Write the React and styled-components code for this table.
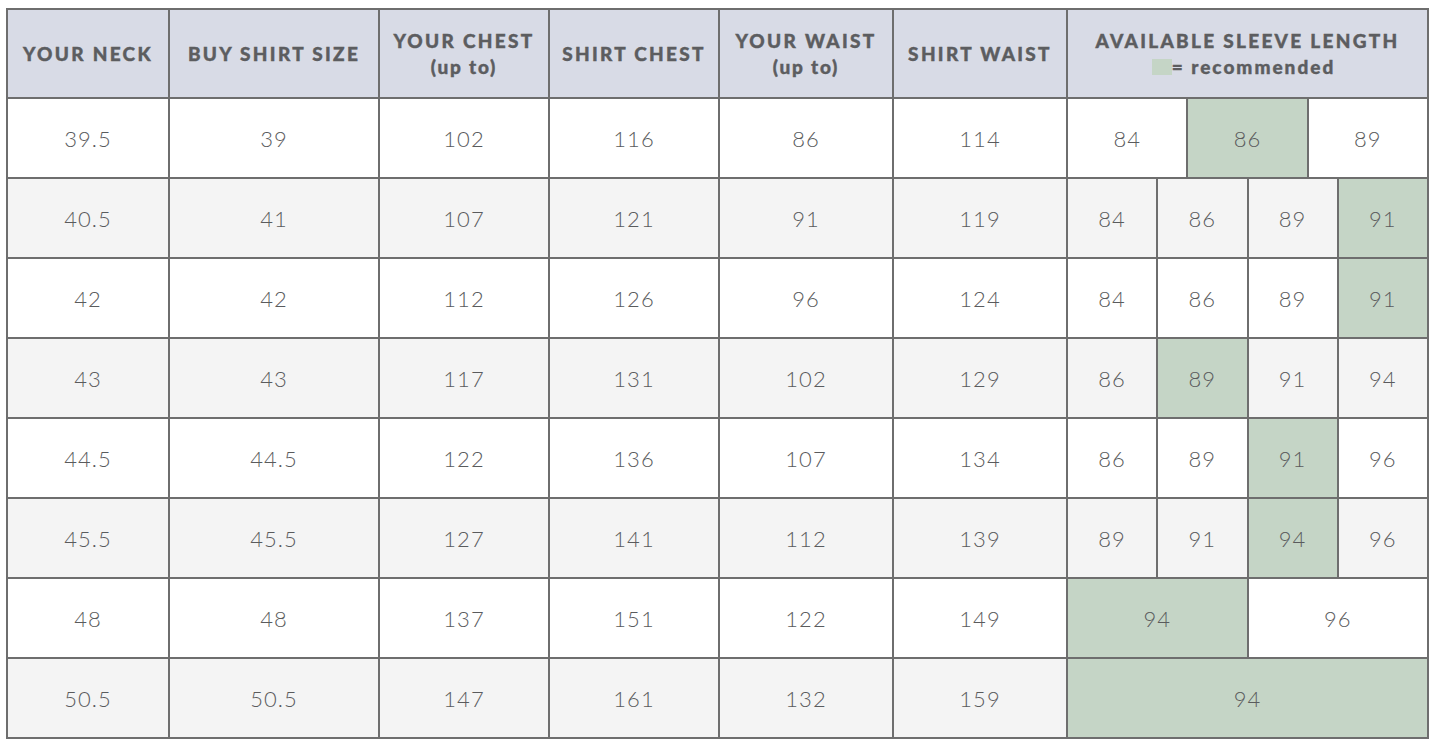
import styled, { createGlobalStyle } from "styled-components";

const GlobalStyle = createGlobalStyle`
  body {
    margin: 0;
    background: #ffffff;
    font-family: Lato, "Noto Sans", sans-serif;
  }
`;

const Page = styled.div`
  padding: 8px 0 0 6px;
`;

const Grid = styled.div`
  display: grid;
  grid-template-columns: 160px 208px 168px 168px 172px 172px 359px;
  grid-template-rows: 87px repeat(8, 78px);
  gap: 2px;
  padding: 2px;
  width: fit-content;
  background: #6e6e6e;
`;

const HeadCell = styled.div`
  display: flex;
  flex-direction: column;
  align-items: center;
  justify-content: center;
  background: #d8dbe6;
  color: #5c5d60;
  font-family: Lato, "Noto Sans", sans-serif;
  font-weight: 900;
  font-size: 19px;
  line-height: 26px;
  letter-spacing: 2.3px;
  text-align: center;
  text-transform: uppercase;
  -webkit-text-stroke: 0.4px #5c5d60;
  padding-top: 1px;
`;

const SubLine = styled.span`
  text-transform: none;
  letter-spacing: 1.8px;
`;

const Legend = styled.span`
  display: flex;
  align-items: center;
  text-transform: none;
  letter-spacing: 2px;
  margin-left: -8px;
`;

const Swatch = styled.i`
  display: inline-block;
  width: 20px;
  height: 16px;
  background: #c5d5c6;
`;

const Cell = styled.div`
  display: flex;
  align-items: center;
  justify-content: center;
  background: ${(p) => (p.$green ? "#c5d5c6" : p.$alt ? "#f4f4f4" : "#ffffff")};
  color: #5a5b5d;
  font-family: Lato, "Noto Sans", sans-serif;
  font-weight: 300;
  font-size: 22px;
  letter-spacing: 1px;
`;

const Sleeves = styled.div`
  display: flex;
  gap: 2px;
  background: #6e6e6e;
`;

const SleeveCell = styled(Cell)`
  flex: 1;
`;

const headers = [
  ["Your Neck"],
  ["Buy Shirt Size"],
  ["Your Chest", "(up to)"],
  ["Shirt Chest"],
  ["Your Waist", "(up to)"],
  ["Shirt Waist"],
];

// sleeve values; the recommended one is marked with *
const rows = [
  ["39.5", "39", "102", "116", "86", "114", ["84", "86*", "89"]],
  ["40.5", "41", "107", "121", "91", "119", ["84", "86", "89", "91*"]],
  ["42", "42", "112", "126", "96", "124", ["84", "86", "89", "91*"]],
  ["43", "43", "117", "131", "102", "129", ["86", "89*", "91", "94"]],
  ["44.5", "44.5", "122", "136", "107", "134", ["86", "89", "91*", "96"]],
  ["45.5", "45.5", "127", "141", "112", "139", ["89", "91", "94*", "96"]],
  ["48", "48", "137", "151", "122", "149", ["94*", "96"]],
  ["50.5", "50.5", "147", "161", "132", "159", ["94*"]],
];

export default function App() {
  return (
    <Page>
      <GlobalStyle />
      <Grid>
        {headers.map(([title, sub]) => (
          <HeadCell key={title}>
            <span>{title}</span>
            {sub && <SubLine>{sub}</SubLine>}
          </HeadCell>
        ))}
        <HeadCell>
          <span>Available Sleeve Length</span>
          <Legend>
            <Swatch />= recommended
          </Legend>
        </HeadCell>

        {rows.map((row, i) => {
          const alt = i % 2 === 1;
          const sleeves = row[6];
          return [
            ...row.slice(0, 6).map((v, j) => (
              <Cell key={`${i}-${j}`} $alt={alt}>
                {v}
              </Cell>
            )),
            <Sleeves key={`${i}-s`}>
              {sleeves.map((s, k) => (
                <SleeveCell key={k} $alt={alt} $green={s.endsWith("*")}>
                  {s.replace("*", "")}
                </SleeveCell>
              ))}
            </Sleeves>,
          ];
        })}
      </Grid>
    </Page>
  );
}
